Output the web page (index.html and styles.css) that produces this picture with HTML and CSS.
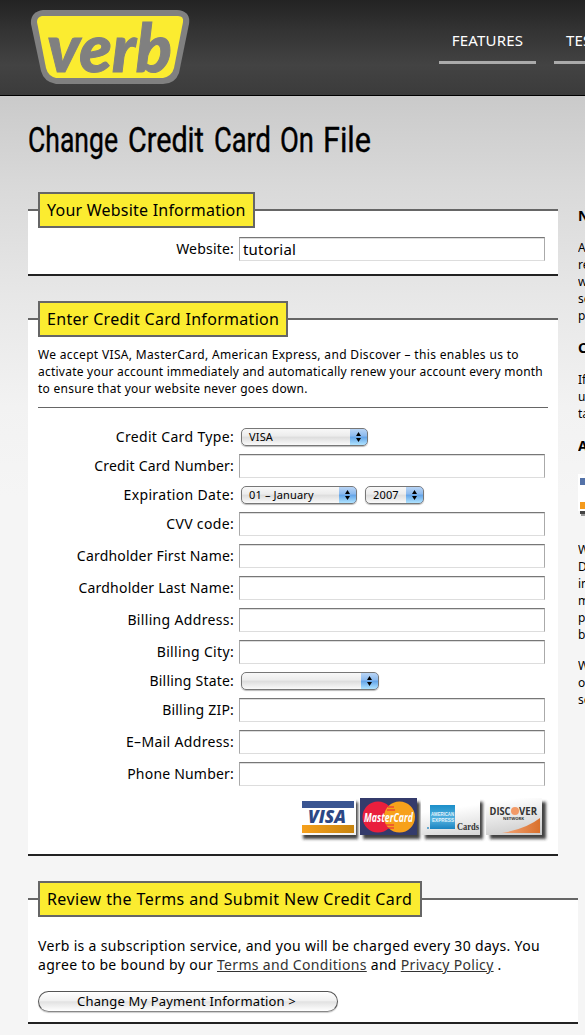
FILE: index.html
```html
<!DOCTYPE html>
<html lang="en">
<head>
<meta charset="utf-8">
<title>Change Credit Card On File</title>
<link rel="stylesheet" href="styles.css">
</head>
<body>
<header class="header">
  <svg class="logo" width="160" height="76" viewBox="30 9 160 76" role="img" aria-label="verb">
    <path fill="#808080" d="M43 10H177Q191 11 189 24L179 73Q175 84 163 84H56Q44 82 41 71L31 24Q30 12 43 10Z"/>
    <path fill="#fbec30" d="M42 16H178Q184 16 183 22L174 68Q172 76 163 78H56Q48 76 46 68L37 22Q37 17 42 16Z"/>
    <text class="logo-text" x="47" y="72" textLength="125" lengthAdjust="spacingAndGlyphs">verb</text>
  </svg>
  <nav class="nav">
    <a class="nav-item">FEATURES</a>
    <a class="nav-item nav-cut">TES</a>
  </nav>
</header>
<div class="page">
  <main class="main">
    <h1 class="title"><svg width="350" height="48" viewBox="0 0 350 48">
      <g class="title-text">
        <text x="0" y="34" textLength="90" lengthAdjust="spacingAndGlyphs">Change</text>
        <text x="100" y="34" textLength="76" lengthAdjust="spacingAndGlyphs">Credit</text>
        <text x="186" y="34" textLength="57" lengthAdjust="spacingAndGlyphs">Card</text>
        <text x="252" y="34" textLength="34" lengthAdjust="spacingAndGlyphs">On</text>
        <text x="295" y="34" textLength="48" lengthAdjust="spacingAndGlyphs">File</text>
      </g>
    </svg></h1>

    <section class="panel site">
      <h2 class="legend w1">Your Website Information</h2>
      <div class="row"><label>Website:</label><div class="input">tutorial</div></div>
    </section>

    <section class="panel card">
      <h2 class="legend w2">Enter Credit Card Information</h2>
      <p class="intro"><span class="i1">We accept VISA, MasterCard, American Express, and Discover – this enables us to</span><br><span class="i2">activate your account immediately and automatically renew your account every month</span><br><span class="i3">to ensure that your website never goes down.</span></p>
      <div class="form">
        <div class="row short"><label class="loose">Credit Card Type:</label><div class="select s-type">VISA<i class="knob"><svg width="7" height="12"><path d="M3.5 1 6 5H1ZM3.5 11 6 7H1Z"/></svg></i></div></div>
        <div class="row"><label>Credit Card Number:</label><div class="input"></div></div>
        <div class="row short"><label class="loose">Expiration Date:</label><div class="select s-month">01 – January<i class="knob"><svg width="7" height="12"><path d="M3.5 1 6 5H1ZM3.5 11 6 7H1Z"/></svg></i></div><div class="select s-year">2007<i class="knob"><svg width="7" height="12"><path d="M3.5 1 6 5H1ZM3.5 11 6 7H1Z"/></svg></i></div></div>
        <div class="row"><label class="loose">CVV code:</label><div class="input"></div></div>
        <div class="row"><label>Cardholder First Name:</label><div class="input"></div></div>
        <div class="row"><label>Cardholder Last Name:</label><div class="input"></div></div>
        <div class="row"><label class="loose">Billing Address:</label><div class="input"></div></div>
        <div class="row"><label class="loose">Billing City:</label><div class="input"></div></div>
        <div class="row short"><label>Billing State:</label><div class="select s-state"><i class="knob"><svg width="7" height="12"><path d="M3.5 1 6 5H1ZM3.5 11 6 7H1Z"/></svg></i></div></div>
        <div class="row"><label>Billing ZIP:</label><div class="input"></div></div>
        <div class="row"><label class="loose">E–Mail Address:</label><div class="input"></div></div>
        <div class="row"><label>Phone Number:</label><div class="input"></div></div>
      </div>
      <svg class="cards" width="252" height="48" viewBox="297 795 252 48">
        <defs>
          <linearGradient id="face" x1="0" y1="0" x2="1" y2="1"><stop offset=".45" stop-color="#fff"/><stop offset="1" stop-color="#c8c8c8"/></linearGradient>
          <linearGradient id="gold" x1="0" x2="1"><stop offset="0" stop-color="#f6a01c"/><stop offset="1" stop-color="#c8850f"/></linearGradient>
          <linearGradient id="blue" x1="0" y1="0" x2="0" y2="1"><stop offset="0" stop-color="#1c8fc9"/><stop offset=".6" stop-color="#55b2e0"/><stop offset="1" stop-color="#1a83c0"/></linearGradient>
          <linearGradient id="swoosh" x1="0" x2="1"><stop offset="0" stop-color="#f3a77a"/><stop offset="1" stop-color="#d9702c"/></linearGradient>
          <filter id="soft" x="-20%" y="-20%" width="140%" height="150%"><feGaussianBlur stdDeviation="1.5"/></filter>
        </defs>
        <g filter="url(#soft)" fill="#222" opacity=".85"><path d="M303 802h55v37h-55zM363 802h57v37h-57zM425 802h58v37h-58zM490 802h56v37h-56z"/></g>
        <path fill="url(#face)" d="M300 799h56v36h-56zM421 798h59v37h-59zM486 798h56v37h-56z"/>
        <path fill="#3a5591" d="M302 801h52v7h-52z"/><path fill="url(#gold)" d="M302 825h52v8h-52z"/>
        <text class="visa" x="308" y="823" textLength="38" lengthAdjust="spacingAndGlyphs">VISA</text>
        <path fill="#343b6b" d="M360 798h57v37h-57z"/>
        <circle cx="378" cy="817" r="15.5" fill="#e91f3d"/><circle cx="399.500" cy="817" r="15.5" fill="#f7a11b"/>
        <path stroke="#e91f3d" d="M388 807h6M387 810h8M386 825h8M388 828h6"/>
        <text class="mc" x="364" y="821.500" textLength="49" lengthAdjust="spacingAndGlyphs">MasterCard</text>
        <path fill="url(#blue)" d="M430 805h25v24h-25z"/>
        <text class="amex" x="431" y="816" textLength="23" lengthAdjust="spacingAndGlyphs">AMERICAN</text>
        <text class="amex" x="432" y="822" textLength="22" lengthAdjust="spacingAndGlyphs">EXPRESS</text>
        <circle cx="428" cy="828" r="1" fill="#3a91c4"/>
        <text class="amex-cards" x="457" y="829.500" textLength="22" lengthAdjust="spacingAndGlyphs">Cards</text>
        <path fill="url(#swoosh)" d="M502 833Q526 829 540 818V833Z"/>
        <circle cx="515" cy="811" r="4" fill="#f29a68"/>
        <text class="disc" x="489.500" y="815" textLength="21" lengthAdjust="spacingAndGlyphs">DISC</text>
        <text class="disc" x="519" y="815" textLength="18" lengthAdjust="spacingAndGlyphs">VER</text>
        <text class="net" x="503" y="820" textLength="21" lengthAdjust="spacingAndGlyphs">NETWORK</text>
      </svg>
    </section>

    <section class="panel terms">
      <h2 class="legend w3">Review the Terms and Submit New Credit Card</h2>
      <p class="agree">Verb is a subscription service, and you will be charged every 30 days. You<br>agree to be bound by our <a class="link">Terms and Conditions</a> and <a class="link">Privacy Policy</a> .</p>
      <div class="button">Change My Payment Information &gt;</div>
    </section>
  </main>
  <aside class="side">
    <h3>N</h3>
    <p>A<br>re<br>w<br>se<br>p</p>
    <h3>C</h3>
    <p>If<br>u<br>ta</p>
    <h3>A</h3>
    <svg class="side-card" width="7" height="50"><path fill="#fff" d="M0 0h7v37H0z"/><path fill="#5472a8" d="M2 4h5v7H2z"/><path fill="#f49a1d" d="M2 28h5v7H2z"/><path fill="#444" d="M2 37h5v3H2z"/><path fill="#999" d="M3 40h4v2H3z"/></svg>
    <p>W<br>D<br>in<br>m<br>p<br>b</p>
    <p>W<br>o<br>se</p>
  </aside>
</div>
</body>
</html>
```
FILE: styles.css
```css
* { box-sizing: border-box; margin: 0; padding: 0; }
html { background: #f5f5f5; }
body {
  width: 585px; height: 1035px; overflow: hidden;
  font-family: "Noto Sans", "Open Sans", sans-serif; color: #000;
}
.header {
  display: flex; justify-content: space-between; height: 96px; overflow: hidden;
  padding: 9px 0 0 30px;
  background: linear-gradient(#232323 0, #333 30px, #434343 65px, #3b3b3b 95px);
  border-bottom: 1px solid #000;
}
.logo-text { font: italic 900 66px Lato, sans-serif; fill: #808080; stroke: #808080; stroke-width: 1px; }
.nav { display: flex; gap: 18px; width: 146px; flex: none; padding-top: 20px; }
.nav-item {
  width: 97px; flex: none; height: 35px; border-bottom: 3px solid #aaa;
  color: #fff; font-size: 15px; line-height: 23px; text-align: center; letter-spacing: .2px;
}
.nav-cut { text-align: left; padding-left: 12px; }
.page {
  display: flex; height: 939px; padding-left: 28px;
  background: linear-gradient(#cacaca 0, #d9d9d9 90px, #e7e7e7 200px, #f2f2f2 310px, #f5f5f5 400px);
}
.main { width: 550px; flex: none; }
.title { height: 113px; padding-top: 22px; }
.title svg { display: block; }
.title-text { font: 400 35px Roboto, sans-serif; stroke: #000; stroke-width: .4px; }
.panel {
  width: 530px; background: #fff; padding: 0 10px;
  border-top: 2px solid #666; border-bottom: 2px solid #222;
}
.site { height: 67px; margin-bottom: 42px; }
.card { height: 538px; margin-bottom: 42px; }
.terms { width: 550px; height: 126px; }
.legend {
  height: 36px; margin-top: -19px; padding: 0 7px; white-space: nowrap;
  background: #fbec30; border: 2px solid #666;
  font-size: 16px; font-weight: 400; line-height: 33px;
}
.w1 { width: 217px; letter-spacing: .22px; }
.w2 { width: 250px; letter-spacing: .3px; }
.w3 { width: 384px; letter-spacing: .4px; }
.row { display: flex; align-items: center; height: 32px; }
.site .row { margin-top: 5px; }
.short { height: 26px; }
.row label {
  width: 196px; margin-right: 5px; flex: none; text-align: right;
  font-size: 14px; line-height: 20px; letter-spacing: .2px; white-space: nowrap;
}
.row .loose { letter-spacing: .34px; }
.input {
  width: 306px; height: 24px; padding-left: 3px; background: #fff;
  border: 1px solid #aaa; border-top: 1px solid #777; border-bottom-color: #ddd;
  box-shadow: inset 0 1px #ddd;
  font-size: 15px; line-height: 23px; letter-spacing: .2px;
}
.intro { margin-top: 9px; height: 62px; border-bottom: 1px solid #666; font-size: 12px; line-height: 17px; white-space: nowrap; }
.i1 { letter-spacing: .33px; }
.i2 { letter-spacing: .23px; }
.i3 { letter-spacing: .27px; }
.form { padding-top: 16px; }
.select {
  display: flex; justify-content: space-between; height: 18px; margin-left: 2px; padding-left: 7px;
  border: 1px solid #777; border-radius: 5px; overflow: hidden;
  background: linear-gradient(#f8f8f8, #ececec 45%, #dcdcdc 50%, #fafafa);
  box-shadow: 0 1px 1px #bbb;
  font-size: 11px; line-height: 16px; letter-spacing: .15px; white-space: nowrap;
}
.knob {
  display: flex; align-items: center; justify-content: center;
  width: 18px; height: 18px; flex: none; margin: -1px -1px 0 auto;
  background: linear-gradient(#b9d5f5, #8ab9ee 45%, #62a3e8 50%, #b0e4ff);
  border: 1px solid #4668a8; border-left: 0; border-radius: 0 5px 5px 0;
}
.s-type { width: 127px; }
.s-month { width: 116px; }
.s-year { width: 59px; margin-left: 8px; }
.s-state { width: 138px; }
.cards { display: block; margin: 5px 0 0 259px; }
.visa { font: italic 800 18px "Open Sans", sans-serif; fill: #2c4784; }
.mc { font: italic 700 12px "Open Sans", sans-serif; fill: #fff; }
.amex { font: 700 6px "Liberation Sans", sans-serif; fill: #e4f4fc; }
.amex-cards { font: 700 10px "Liberation Serif", serif; fill: #333; }
.disc { font: 700 10px "Open Sans", sans-serif; fill: #333; }
.net { font: 700 4px "Open Sans", sans-serif; fill: #333; }
.agree { margin-top: 19px; font-size: 14px; line-height: 19px; letter-spacing: .32px; white-space: nowrap; }
.link { color: #333; text-decoration: underline; }
.button {
  width: 300px; height: 21px; margin-top: 17px; padding-right: 3px;
  border: 1px solid #555; border-radius: 11px; border-bottom-color: #888;
  background: linear-gradient(#fff, #f1f1f1 45%, #e2e2e2 52%, #fff);
  box-shadow: 0 1px 1px #ccc;
  font-size: 13px; line-height: 18px; letter-spacing: .16px; text-align: center; white-space: nowrap;
}
.side { width: 7px; overflow: hidden; padding-top: 110px; font-size: 12px; line-height: 17px; white-space: nowrap; }
.side h3 { font-size: 14px; line-height: 20px; }
.side p { margin: 13px 0 14px; }
.side-card { display: block; margin: 18px 0 17px; }
```
